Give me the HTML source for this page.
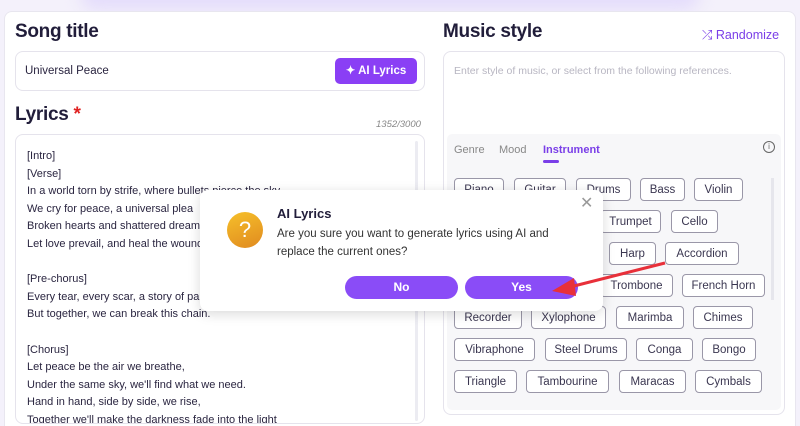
<!DOCTYPE html>
<html><head><meta charset="utf-8"><style>
*{margin:0;padding:0;box-sizing:border-box}
html,body{width:800px;height:426px;overflow:hidden}
body{background:#f4f1fb;font-family:"Liberation Sans",sans-serif;color:#2a2540;position:relative}
.a{position:absolute}
.glow{left:80px;top:-20px;width:620px;height:30px;background:#e4dcfb;filter:blur(8px);border-radius:20px}
.card{left:4px;top:11px;width:792px;height:415px;background:#fff;border:1px solid #e8e6ef;border-bottom:none;border-radius:8px 8px 0 0}
h2{position:absolute;font-size:19px;font-weight:bold;color:#211d3a;letter-spacing:-0.3px}
.box{border:1px solid #e5e3ec;border-radius:8px;background:#fff}
.tag{position:absolute;height:23px;border:1px solid #9a97a8;border-radius:4px;font-size:11.5px;color:#3a3650;text-align:center;line-height:22px;background:#fff}
.lyr{left:11px;top:13px;font-size:11px;line-height:17.6px;color:#2a2540;white-space:pre}
.btn{position:absolute;height:23px;border-radius:12px;background:#8a4cf7;color:#fff;font-weight:bold;font-size:12px;text-align:center;line-height:23px}
</style></head><body>
<div class="a glow"></div>
<div class="a card"></div>
<h2 style="left:15px;top:21px">Song title</h2>
<div class="a box" style="left:15px;top:51px;width:410px;height:40px"></div>
<div class="a" style="left:25px;top:65px;font-size:11.5px;color:#2a2540">Universal Peace</div>
<div class="a" style="left:335px;top:58px;width:82px;height:26px;background:#8a3ff5;border-radius:5px;color:#fff;font-size:11.5px;font-weight:bold;line-height:26px;text-align:center">✦ AI Lyrics</div>
<h2 style="left:15px;top:104px">Lyrics <span style="color:#e02020">*</span></h2>
<div class="a" style="left:376px;top:119px;font-size:9.5px;font-style:italic;color:#888">1352/3000</div>
<div class="a box" style="left:15px;top:134px;width:410px;height:290px;overflow:hidden">
<div class="a lyr">[Intro]
[Verse]
In a world torn by strife, where bullets pierce the sky,
We cry for peace, a universal plea
Broken hearts and shattered dreams
Let love prevail, and heal the wounds

[Pre-chorus]
Every tear, every scar, a story of pain,
But together, we can break this chain.

[Chorus]
Let peace be the air we breathe,
Under the same sky, we'll find what we need.
Hand in hand, side by side, we rise,
Together we'll make the darkness fade into the light</div>
<div class="a" style="left:399px;top:6px;width:3px;height:280px;background:#ececf2;border-radius:2px"></div>
</div>

<h2 style="left:443px;top:21px">Music style</h2>
<div class="a" style="left:702px;top:27px;font-size:12.5px;color:#7a3ee8"><span style="font-size:13px">⤮</span> Randomize</div>
<div class="a box" style="left:443px;top:51px;width:342px;height:364px"></div>
<div class="a" style="left:454px;top:65px;font-size:10.5px;color:#b8b6c2">Enter style of music, or select from the following references.</div>
<div class="a" style="left:447px;top:134px;width:334px;height:276px;background:#f7f7f9;border-radius:5px"></div>
<div class="a" style="left:454px;top:144px;font-size:11px;color:#888">Genre</div>
<div class="a" style="left:499px;top:144px;font-size:11px;color:#888">Mood</div>
<div class="a" style="left:543px;top:144px;font-size:11px;color:#7a3ee8;font-weight:bold">Instrument</div>
<div class="a" style="left:543px;top:160px;width:16px;height:3px;background:#7a3ee8;border-radius:2px"></div>
<div class="a" style="left:763px;top:141px;width:12px;height:12px;border:1.3px solid #666;border-radius:50%;font-size:8px;text-align:center;line-height:10px;color:#666">i</div>
<div class="a" style="left:771px;top:178px;width:3px;height:122px;background:#e6e6ec"></div>

<div class="tag" style="left:454px;top:178px;width:50px">Piano</div>
<div class="tag" style="left:514px;top:178px;width:52px">Guitar</div>
<div class="tag" style="left:576px;top:178px;width:55px">Drums</div>
<div class="tag" style="left:640px;top:178px;width:45px">Bass</div>
<div class="tag" style="left:694px;top:178px;width:49px">Violin</div>
<div class="tag" style="left:530px;top:210px;width:60px">Flute</div>
<div class="tag" style="left:600px;top:210px;width:61px">Trumpet</div>
<div class="tag" style="left:671px;top:210px;width:47px">Cello</div>
<div class="tag" style="left:540px;top:242px;width:60px">Sax</div>
<div class="tag" style="left:609px;top:242px;width:47px">Harp</div>
<div class="tag" style="left:665px;top:242px;width:74px">Accordion</div>
<div class="tag" style="left:530px;top:274px;width:60px">Tuba</div>
<div class="tag" style="left:600px;top:274px;width:73px">Trombone</div>
<div class="tag" style="left:682px;top:274px;width:83px">French Horn</div>
<div class="tag" style="left:454px;top:306px;width:68px">Recorder</div>
<div class="tag" style="left:531px;top:306px;width:75px">Xylophone</div>
<div class="tag" style="left:616px;top:306px;width:68px">Marimba</div>
<div class="tag" style="left:693px;top:306px;width:60px">Chimes</div>
<div class="tag" style="left:454px;top:338px;width:81px">Vibraphone</div>
<div class="tag" style="left:545px;top:338px;width:82px">Steel Drums</div>
<div class="tag" style="left:636px;top:338px;width:57px">Conga</div>
<div class="tag" style="left:702px;top:338px;width:54px">Bongo</div>
<div class="tag" style="left:454px;top:370px;width:63px">Triangle</div>
<div class="tag" style="left:526px;top:370px;width:83px">Tambourine</div>
<div class="tag" style="left:619px;top:370px;width:67px">Maracas</div>
<div class="tag" style="left:695px;top:370px;width:67px">Cymbals</div>

<div class="a" style="left:200px;top:190px;width:403px;height:121px;background:#fff;border-radius:8px;box-shadow:0 3px 12px rgba(0,0,0,.15)"></div>
<div class="a" style="left:227px;top:212px;width:36px;height:36px;border-radius:50%;background:linear-gradient(160deg,#f6c02a,#e08a20);color:#fff;font-size:22px;text-align:center;line-height:36px">?</div>
<div class="a" style="left:277px;top:206px;font-size:13px;font-weight:bold;color:#211d3a">AI Lyrics</div>
<div class="a" style="left:277px;top:225px;font-size:11.5px;line-height:18px;color:#333">Are you sure you want to generate lyrics using AI and<br>replace the current ones?</div>
<div class="a" style="left:580px;top:193px;font-size:16px;color:#999">✕</div>
<div class="btn" style="left:345px;top:276px;width:113px">No</div>
<div class="btn" style="left:465px;top:276px;width:113px">Yes</div>
<svg class="a" style="left:0;top:0" width="800" height="426"><line x1="665" y1="263" x2="570" y2="287" stroke="#e8303a" stroke-width="3"/><polygon points="552,291 574,278 576,296" fill="#e8303a"/></svg>
</body></html>
